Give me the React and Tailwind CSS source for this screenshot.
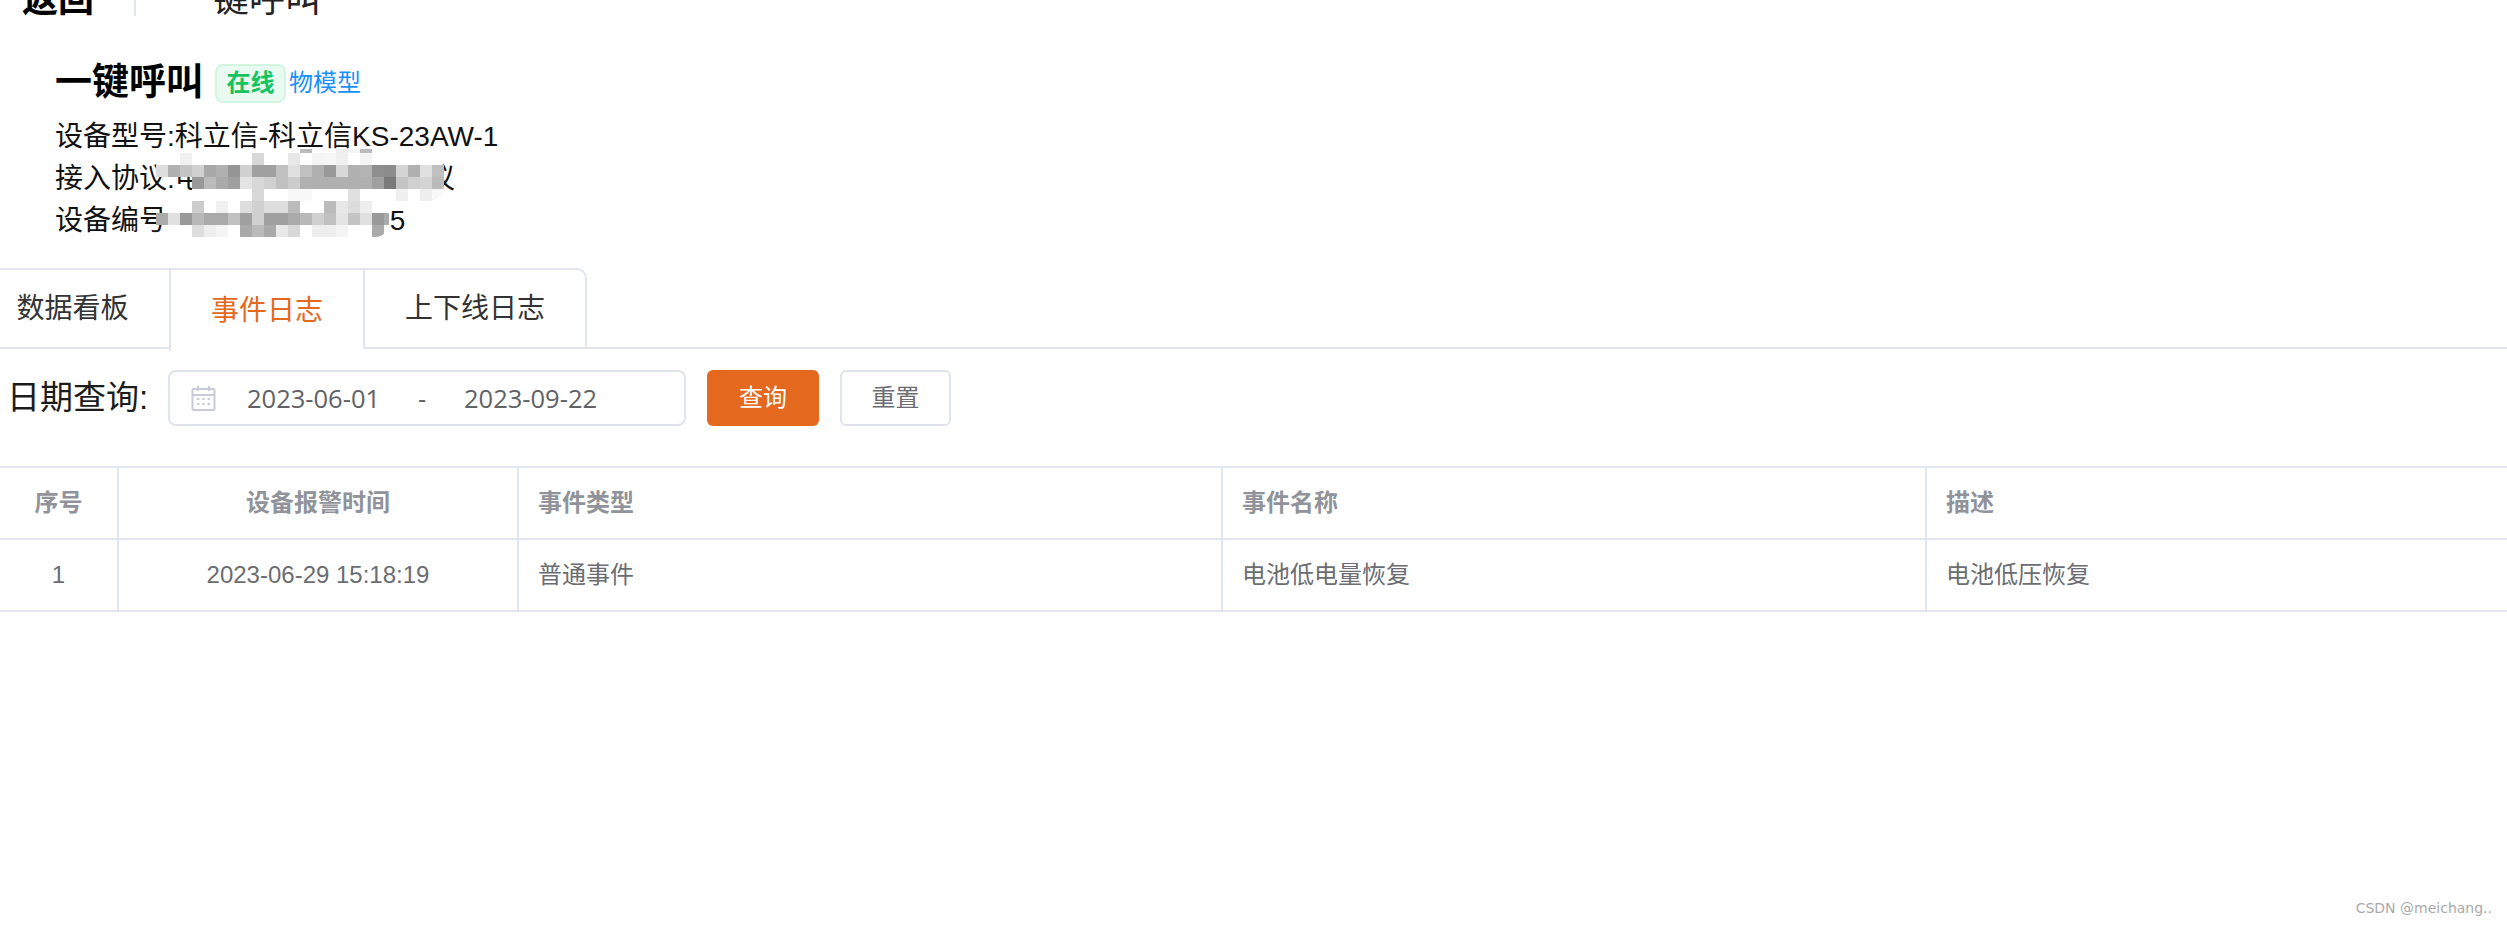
import React from 'react'

const font = "font-['Liberation_Sans','Noto_Sans_CJK_SC',sans-serif]"

// blurred-out patch over the protocol and serial lines, "ff" is white, "" lets the text through
const blurTop = [
  ['', '', '', '', '', '', '', '', '', 'ff', 'ff', 'ff', 'bb', 'ff', 'ff', 'ee', 'f4', 'bb', 'ff', 'ff', 'ff', '', '', ''],
  ['', 'ff', 'f0', 'ff', 'ff', 'ff', 'ff', 'ff', 'd8', 'ff', 'ff', 'e8', 'ff', 'f4', 'f6', 'f0', 'ff', 'f4', 'ff', 'ff', 'ff', 'ff', 'ff', ''],
  ['dd', 'b0', 'c4', 'd0', 'a8', 'b0', '95', 'd0', 'a0', 'a0', 'c0', 'e0', 'c0', 'b0', '99', 'd8', 'b0', 'b4', '8f', '8c', 'd4', 'b0', 'e0', 'c0'],
  ['', '', '', '99', 'bb', 'aa', 'a0', 'e4', 'd8', 'd0', 'c0', 'cc', 'b0', 'b0', 'b0', 'b0', 'b0', 'b0', 'a0', '7a', 'c4', 'd0', 'd4', 'bb'],
  ['', '', '', 'ff', 'ff', 'ff', 'ff', 'ff', 'd8', 'ff', 'ff', 'f8', 'f8', 'ff', 'ff', 'ff', 'e0', 'ff', 'ff', 'ff', 'f0', 'ff', 'ee', 'f8'],
]

const blurBottom = [
  ['', 'ff', 'ff', 'cc', 'ff', 'f0', 'ff', 'dd', 'd0', 'dd', 'dd', 'bb', 'ff', 'ff', 'bb', 'e8', 'dd', 'ee', 'ff', ''],
  ['aa', 'e0', '99', 'b8', 'aa', 'aa', 'c0', 'a0', 'd0', 'a0', 'a0', 'aa', 'b8', 'd0', 'c0', 'e4', 'c4', 'e0', '99', 'aa'],
  ['', 'ff', 'ff', 'dd', 'ee', 'f4', 'ff', 'aa', 'bb', 'aa', 'e8', 'd8', 'ff', 'ee', 'ee', 'f4', 'ff', 'ff', 'aa', 'ff'],
]

const Blur = ({ rows, className }) => (
  <div className={`absolute grid overflow-hidden ${className}`}>
    {rows.flat().map((c, i) => (
      <div key={i} style={c ? { backgroundColor: `#${c}${c}${c}` } : undefined} />
    ))}
  </div>
)

const CalendarIcon = () => (
  <svg width="25" height="26" viewBox="0 0 25 26" fill="none" stroke="#c8ccd8" strokeWidth="2" className="shrink-0">
    <rect x="1.5" y="4" width="22" height="21" rx="1" />
    <path d="M1.5 10h22M7 1v5M18 1v5" />
    <path d="M6 14h2.4M11.3 14h2.4M16.6 14h2.4M6 19h2.4M11.3 19h2.4M16.6 19h2.4" />
  </svg>
)

const tabs = [
  { name: '数据看板', width: 'w-[193px]', active: false },
  { name: '事件日志', width: 'w-[194px]', active: true },
  { name: '上下线日志', width: 'w-[222px]', active: false },
]

const columns = [
  { title: '序号', value: '1', center: true },
  { title: '设备报警时间', value: '2023-06-29 15:18:19', center: true },
  { title: '事件类型', value: '普通事件' },
  { title: '事件名称', value: '电池低电量恢复' },
  { title: '描述', value: '电池低压恢复' },
]

const Cell = ({ col, head, index }) => (
  <div
    className={`h-[70px] flex items-center text-[24px] ${index > 0 ? 'border-l-2 border-[#e1e5ed]' : ''} ${col.center ? 'justify-center' : 'pl-[19px]'} ${head ? 'font-bold text-[#909399]' : 'text-[#6b6d72]'}`}
  >
    {head ? col.title : col.value}
  </div>
)

const App = () => {
  return (
    <div className={`relative h-[925px] w-full overflow-hidden bg-white ${font}`}>
      <div className="h-[16px] overflow-hidden flex items-end">
        <div className="flex items-end h-[16px] leading-[36px]">
          <span className="ml-[22px] w-[112px] shrink-0 text-[36px] leading-[36px] font-bold text-black mb-[-2px]">返回</span>
          <span className="w-[2px] h-[16px] bg-[#dfe3eb] shrink-0" />
          <span className="ml-[41px] text-[36px] leading-[36px] text-[#222] mb-[-2px] whitespace-nowrap">一键呼叫</span>
        </div>
      </div>

      <div className="pl-[55px] pt-[45px]">
        <div className="flex items-center h-[44px]">
          <span className="text-[37px] font-bold text-black leading-[44px]">一键呼叫</span>
          <span className="ml-[12px] w-[71px] h-[39px] flex items-center justify-center rounded-[8px] border-2 border-[#d2f5e0] bg-[#e9faf0] text-[24px] font-bold text-[#16c35f]">在线</span>
          <span className="ml-[3px] text-[24px] text-[#1890ff]">物模型</span>
        </div>
        <div className="mt-[11px] text-[28px] leading-[42px] text-[#111]">
          <div>设备型号:科立信-科立信KS-23AW-1</div>
          <div className="flex">
            <span>接入协议:电</span>
            <span className="w-[224px]" />
            <span>议</span>
          </div>
          <div className="flex">
            <span>设备编号:</span>
            <span className="w-[215px]" />
            <span>5</span>
          </div>
        </div>
      </div>

      <div className="mt-[26px] flex h-[81px] border-b-2 border-[#e1e5ed]">
        <div className="flex -ml-[26px] rounded-t-[10px] border-2 border-b-0 border-[#e1e5ed] h-[81px]">
          {tabs.map((tab, i) => (
            <div
              key={tab.name}
              className={`${tab.width} flex items-center justify-center text-[28px] ${i > 0 ? 'border-l-2 border-[#e1e5ed]' : ''} ${tab.active ? 'bg-white text-[#e4681d] h-[81px]' : 'text-[#333] h-[79px] border-b-2 border-b-[#e1e5ed]'}`}
            >
              {tab.name}
            </div>
          ))}
        </div>
      </div>

      <div className="mt-[21px] flex items-center h-[56px] pl-[7px]">
        <span className="w-[161px] text-[33px] text-[#1c1c1c] whitespace-nowrap">日期查询:</span>
        <div className="w-[518px] h-[56px] flex items-center pl-[21px] rounded-[8px] border-2 border-[#dfe3eb] font-['Open_Sans',sans-serif] text-[25.5px] text-[#606266]">
          <CalendarIcon />
          <span className="ml-[31px] w-[134px] whitespace-nowrap">2023-06-01</span>
          <span className="ml-[37px] w-[46px]">-</span>
          <span className="whitespace-nowrap">2023-09-22</span>
        </div>
        <button className="ml-[21px] w-[112px] h-[56px] rounded-[6px] bg-[#e4681d] text-[24px] text-white">查询</button>
        <button className="ml-[21px] w-[111px] h-[56px] rounded-[6px] border-2 border-[#dfe3eb] bg-white text-[24px] text-[#6b6d72]">重置</button>
      </div>

      <div className="mt-[40px] grid grid-cols-[117px_400px_704px_704px_1fr] border-t-2 border-[#e1e5ed]">
        {columns.map((col, i) => (
          <div key={col.title} className="border-b-2 border-[#e1e5ed]">
            <Cell col={col} head index={i} />
          </div>
        ))}
        {columns.map((col, i) => (
          <div key={col.value} className="border-b-2 border-[#e1e5ed]">
            <Cell col={col} index={i} />
          </div>
        ))}
      </div>

      <Blur
        rows={blurTop}
        className="left-[156px] top-[149px] w-[288px] grid-cols-[repeat(24,12px)] grid-rows-[4px_12px_12px_12px_12px] rounded-r-[16px]"
      />
      <Blur
        rows={blurBottom}
        className="left-[156px] top-[201px] w-[233px] grid-cols-[repeat(20,12px)] grid-rows-[repeat(3,12px)] rounded-[14px]"
      />

      <span className="absolute right-[15px] bottom-[6px] font-['DejaVu_Sans',sans-serif] text-[14px] text-[#aaaaaa]">CSDN @meichang..</span>
    </div>
  )
}

export default App
